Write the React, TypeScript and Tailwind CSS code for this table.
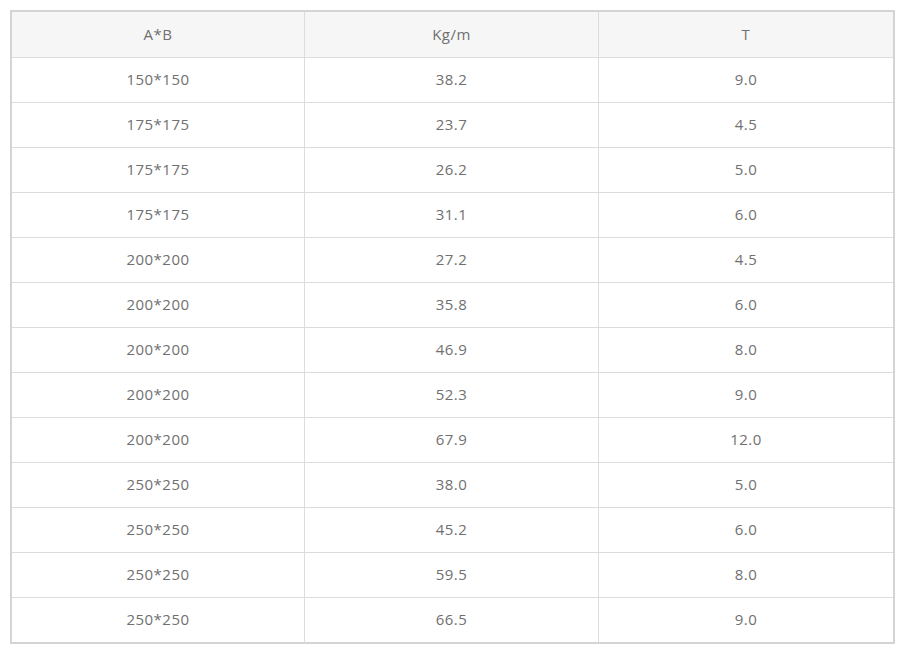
const rows: [string, string, string][] = [
  ["150*150", "38.2", "9.0"],
  ["175*175", "23.7", "4.5"],
  ["175*175", "26.2", "5.0"],
  ["175*175", "31.1", "6.0"],
  ["200*200", "27.2", "4.5"],
  ["200*200", "35.8", "6.0"],
  ["200*200", "46.9", "8.0"],
  ["200*200", "52.3", "9.0"],
  ["200*200", "67.9", "12.0"],
  ["250*250", "38.0", "5.0"],
  ["250*250", "45.2", "6.0"],
  ["250*250", "59.5", "8.0"],
  ["250*250", "66.5", "9.0"],
];

const colBorder = ["border-r", "border-r", ""];

export default function App() {
  return (
    <div className="min-h-screen bg-white pl-[10px] pt-[10px] font-['Open_Sans','Noto_Sans_CJK_KR',sans-serif] text-[15px] tracking-[0.5px] text-[#707070]">
      <div className="w-[885px] border-2 border-[#d4d4d4]">
        <div className="grid grid-cols-[293px_294px_1fr] border-b border-[#dcdcdc] bg-[#f6f6f6]">
          {["A*B", "Kg/m", "T"].map((h, j) => (
            <div key={h} className={`flex h-[45px] items-center justify-center border-[#dcdcdc] pb-[1px] ${colBorder[j]}`}>
              {h}
            </div>
          ))}
        </div>
        {rows.map((r, i) => (
          <div
            key={i}
            className={`grid grid-cols-[293px_294px_1fr] border-[#dcdcdc] ${i < rows.length - 1 ? "border-b" : ""}`}
          >
            {r.map((c, j) => (
              <div key={j} className={`flex h-[44px] items-center justify-center border-[#dcdcdc] pb-[2px] ${colBorder[j]}`}>
                {c}
              </div>
            ))}
          </div>
        ))}
      </div>
    </div>
  );
}
